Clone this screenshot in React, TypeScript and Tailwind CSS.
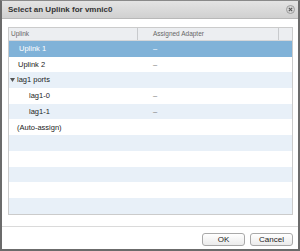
import React from "react";

const rows: { label: string; adapter?: string; indent: number; group?: boolean }[] = [
  { label: "Uplink 1", adapter: "–", indent: 10 },
  { label: "Uplink 2", adapter: "–", indent: 9 },
  { label: "lag1 ports", indent: 1, group: true },
  { label: "lag1-0", adapter: "–", indent: 20 },
  { label: "lag1-1", adapter: "–", indent: 20 },
  { label: "(Auto-assign)", indent: 8 },
  { label: "", indent: 0 },
  { label: "", indent: 0 },
  { label: "", indent: 0 },
  { label: "", indent: 0 },
  { label: "", indent: 0 },
];

export default function App() {
  return (
    <div
      className="w-[300px] h-[251px] flex flex-col bg-white border-x-2 border-b-2 border-t border-x-[#6b6b6b] border-b-[#6b6b6b] border-t-[#8a8a8a] overflow-hidden"
      style={{ fontFamily: '"Liberation Sans", Arial, sans-serif' }}
    >
      {/* Title bar */}
      <div className="h-[18px] shrink-0 flex items-center justify-between pl-[6px] pr-[3px] bg-gradient-to-b from-[#e4e4e4] to-[#d0d0d0] border-b border-[#b8b8b8]">
        <span className="text-[8px] font-bold text-[#333] leading-none">Select an Uplink for vmnic0</span>
        <span className="w-[9px] h-[9px] rounded-full bg-[#d6d6d6] border border-[#9c9c9c] flex items-center justify-center">
          <svg width="5" height="5" viewBox="0 0 5 5">
            <path d="M0.8 0.8 L4.2 4.2 M4.2 0.8 L0.8 4.2" stroke="#555" strokeWidth="1.1" />
          </svg>
        </span>
      </div>

      {/* Body */}
      <div className="flex-1 pt-[8px] pl-[6px] pr-[5px] bg-white">
        <div className="border border-[#cbcbcb] bg-white">
          {/* Header */}
          <div className="h-[13px] flex bg-[#eceef1] border-b border-[#d4d6d9] text-[6.5px] text-[#666] leading-none">
            <div className="w-[129px] border-r border-[#c8cacd] flex items-center pl-[2px]">Uplink</div>
            <div className="w-[10px]" />
            <div className="w-[131px] border-r border-[#c8cacd] flex items-center pl-[5px]">Assigned Adapter</div>
            <div className="flex-1" />
          </div>
          {/* Rows */}
          {rows.map((r, i) => {
            const selected = i === 0;
            const striped = !selected && i % 2 === 0;
            const bg = selected ? "bg-[#80b2d8]" : striped ? "bg-[#e8f0f8]" : "bg-white";
            const color = selected ? "text-white" : "text-[#222]";
            return (
              <div key={i} className={`h-[15.7px] flex items-center text-[7.5px] leading-none ${bg} ${color}`}>
                <div className="w-[139px] flex items-center" style={{ paddingLeft: r.indent }}>
                  {r.group && (
                    <svg width="5" height="4" viewBox="0 0 5 4" className="mr-[2px]">
                      <path d="M0 0 L5 0 L2.5 4 Z" fill="#555" />
                    </svg>
                  )}
                  {r.label}
                </div>
                <div className={`pl-[5px] ${selected ? "text-white" : "text-[#777]"}`}>{r.adapter ?? ""}</div>
              </div>
            );
          })}
        </div>
      </div>

      {/* Footer */}
      <div className="h-[23px] shrink-0 border-t border-[#dadada] bg-white flex items-start justify-end gap-[5px] pt-[6px] pr-[5px]">
        <button className="w-[43px] h-[13px] rounded-[3px] border border-[#a9a9a9] bg-gradient-to-b from-white to-[#ebebeb] text-[8px] text-[#222] leading-none flex items-center justify-center">
          OK
        </button>
        <button className="w-[43px] h-[13px] rounded-[3px] border border-[#a9a9a9] bg-gradient-to-b from-white to-[#ebebeb] text-[8px] text-[#222] leading-none flex items-center justify-center">
          Cancel
        </button>
      </div>
    </div>
  );
}
